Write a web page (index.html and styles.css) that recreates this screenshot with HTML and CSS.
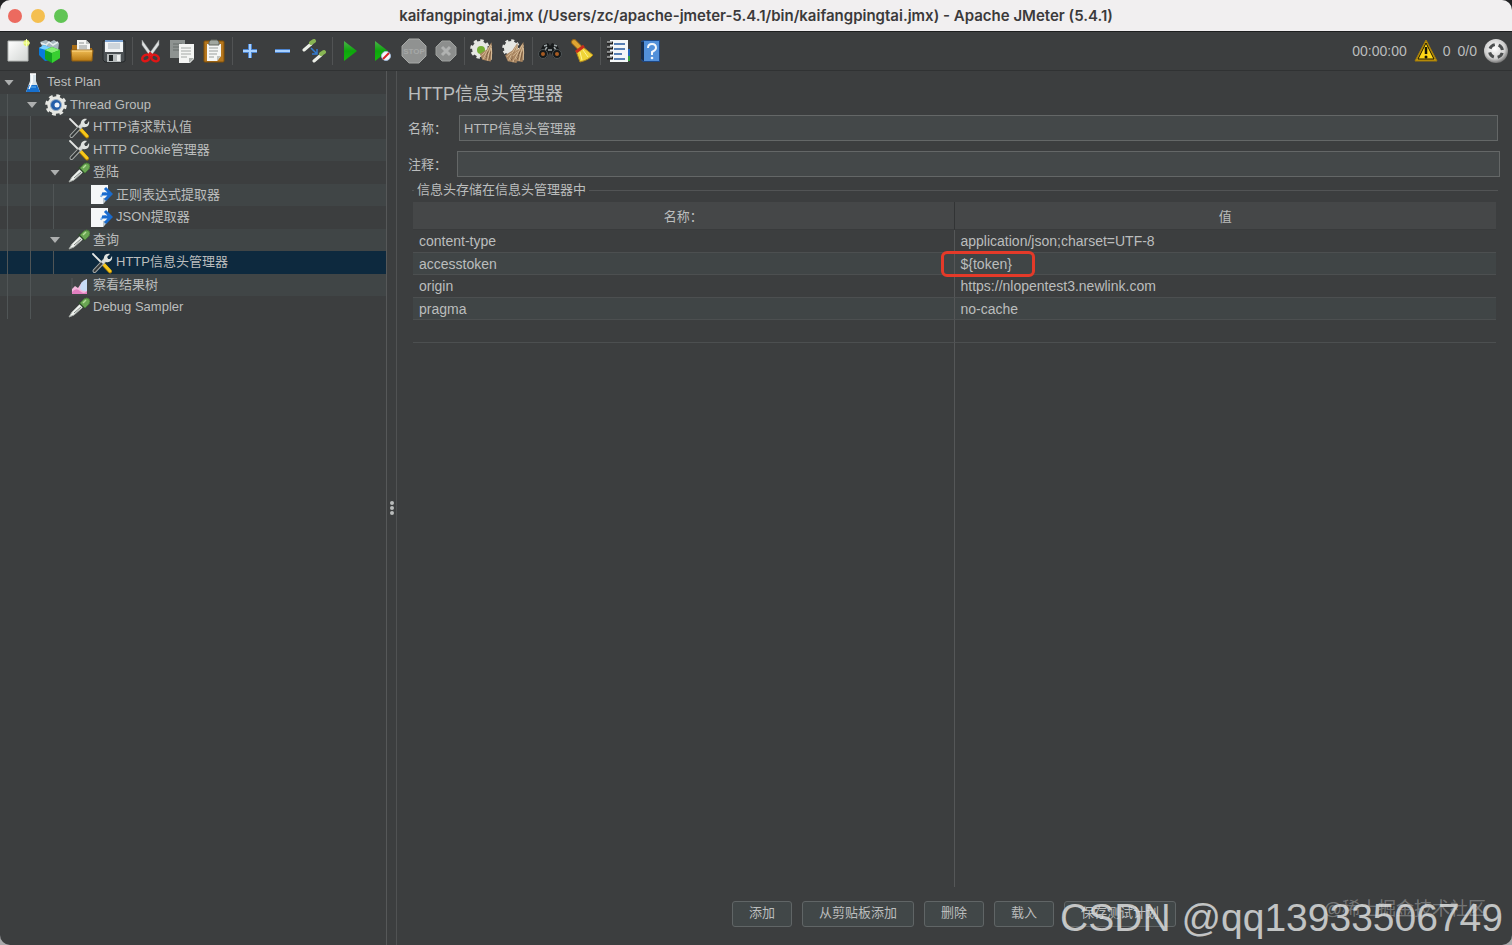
FILE: index.html
```html
<!DOCTYPE html>
<html lang="zh-CN">

<head>
    <meta charset="UTF-8">
    <meta name="viewport" content="width=device-width, initial-scale=1.0">
    <title>Apache JMeter (5.4.1)</title>
    <link rel="stylesheet" href="styles.css">
</head>

<body>
    <!-- shared icons -->
    <svg class="defs" width="0" height="0" aria-hidden="true">
        <defs>
            <linearGradient id="gold" x1="0" y1="0" x2="0" y2="1">
                <stop offset="0" stop-color="#f0bd55" />
                <stop offset="1" stop-color="#b97a12" />
            </linearGradient>
            <linearGradient id="paper" x1="0" y1="0" x2="1" y2="1">
                <stop offset="0" stop-color="#ffffff" />
                <stop offset="1" stop-color="#d2d5d3" />
            </linearGradient>
            <linearGradient id="play" x1="0" y1="0" x2="0" y2="1">
                <stop offset="0" stop-color="#4cb04a" />
                <stop offset="0.5" stop-color="#0da50c" />
                <stop offset="1" stop-color="#14b80c" />
            </linearGradient>
            <radialGradient id="ball" cx="0.45" cy="0.4" r="0.6">
                <stop offset="0" stop-color="#ffffff" />
                <stop offset="0.7" stop-color="#d0d0d0" />
                <stop offset="1" stop-color="#777777" />
            </radialGradient>
        </defs>
        <symbol id="tools" viewBox="0 0 22 22">
            <path d="M2 2l11 11" stroke="#e4e6e4" stroke-width="1.8" stroke-linecap="round" />
            <path d="M12.500 12.500l6.500 7" stroke="#a87900" stroke-width="4" stroke-linecap="round" />
            <path d="M12.500 12l6.500 7" stroke="#f6c71a" stroke-width="3" stroke-linecap="round" />
            <path d="M3.500 19L15 7" stroke="#a4a8a6" stroke-width="4" stroke-linecap="round" />
            <path d="M3.500 19L11 11" stroke="#343838" stroke-width="2" stroke-linecap="round" />
            <path d="M11 11l4-4" stroke="#d8dbd9" stroke-width="3" />
            <path d="M13 8c-1-4 2-7 6-6l-3 3 1 2 2 0 2-3c1 4-2 7-6 6z" fill="#dfe2df" />
        </symbol>
        <symbol id="pipette" viewBox="0 0 22 22">
            <path d="M1 20l3-5 8-8 3 3-9 8z" fill="#eef1ee" stroke="#a9aeaa" />
            <path d="M6 16l7-6" stroke="#7d847f" />
            <path d="M11 5l6 6" stroke="#2f4a2c" stroke-width="2.500" />
            <path d="M12 6l4-4q3-2 5 0t0 5l-4 4z" fill="#6aa653" stroke="#47793a" />
            <path d="M15 6l3-3" stroke="#b3de98" stroke-width="1.500" />
        </symbol>
        <symbol id="extract" viewBox="0 0 22 22">
            <path d="M0 1h17v13l-5 6H0z" fill="#f5f7f8" />
            <path d="M17 14h-5v6z" fill="#b9c5ce" />
            <path d="M10 13q1-4 5-4" fill="none" stroke="#7db4ed" stroke-width="2" />
            <path d="M14 4l6 6-6 6M11 10h8" fill="none" stroke="#196bce" stroke-width="3" />
        </symbol>
        <symbol id="cog" viewBox="0 0 24 24">
            <circle cx="12" cy="12" r="9.500" fill="#e6e7e3" />
            <circle cx="12" cy="12" r="10" fill="none" stroke="#e6e7e3" stroke-width="3.500" stroke-dasharray="4 3.854" />
        </symbol>
        <symbol id="broom" viewBox="0 0 24 24">
            <path d="M21 1l-6 9-8 5 3 7 10 2 2-10z" fill="#a98560" />
            <path d="M20 4l-5 9-4 8M21 5l-3 9-2 9M21 8l0 14M14 12l-5 5M18 13l-5 8" fill="none" stroke="#dec5a0" />
            <path d="M17 12l-3 9M20 12l-2 10" fill="none" stroke="#72553a" />
        </symbol>
    </svg>

    <div class="window">
        <!-- Title bar -->
        <header class="titlebar">
            <div class="lights">
                <button class="light red" aria-label="关闭"></button>
                <button class="light yellow" aria-label="最小化"></button>
                <button class="light green" aria-label="缩放"></button>
            </div>
            <h1>kaifangpingtai.jmx (/Users/zc/apache-jmeter-5.4.1/bin/kaifangpingtai.jmx) - Apache JMeter (5.4.1)</h1>
        </header>

        <!-- Toolbar -->
        <div class="toolbar">
            <button class="tool" aria-label="新建"><svg viewBox="0 0 24 24">
                    <path d="M2 2h20v20H2z" fill="url(#paper)" stroke="#b6b9b7" />
                    <circle cx="20.500" cy="4" r="3" fill="#e1f36c" />
                    <path d="M20.500 0v8M17 4h7" stroke="#f8ffb9" />
                </svg></button>
            <button class="tool" aria-label="模板"><svg viewBox="0 0 24 24">
                    <path d="M2 3l6-2 4 2 4-2 5 3-1 8-13 1z" fill="#a7b7be" />
                    <path d="M3 4l5 2 3-3 4 3 5-3" fill="none" stroke="#e7eeee" stroke-width="1.500" />
                    <path d="M1 9l5-3 7 3v12l-6 1-6-6z" fill="#087bdc" />
                    <path d="M1 9l5-3 7 3-5 2z" fill="#7ad2ff" />
                    <path d="M7 11l7-3 8 3v8l-8 5-7-4z" fill="#13a321" />
                    <path d="M7 11l7-3 8 3-8 3z" fill="#84ef71" />
                    <path d="M14 14v10l8-5v-8z" fill="#38cf31" />
                </svg></button>
            <button class="tool" aria-label="打开"><svg viewBox="0 0 24 24">
                    <path d="M2 11V6h6l2 3h12v3H2z" fill="#a96e16" />
                    <path d="M7 1h9l4 4v8H7z" fill="#f4f5f3" />
                    <path d="M16 1v4h4" fill="#bfc3c1" />
                    <path d="M9 4h5M9 7h8M9 9h8" stroke="#8e9392" />
                    <path d="M1 11h22l-1 11H2z" fill="url(#gold)" stroke="#8c5c13" />
                    <path d="M2 12h20" stroke="#ffda8a" />
                </svg></button>
            <button class="tool" aria-label="保存"><svg viewBox="0 0 24 24">
                    <path d="M1 2h22v20l-2 1H3l-2-2z" fill="#4c5154" stroke="#25292b" />
                    <path d="M3 1h18v12H3z" fill="#f2f4f5" />
                    <path d="M3 1h18v2H3z" fill="#7ba4d4" />
                    <path d="M6 5h12M6 7h12M6 9h12" stroke="#aab6c1" />
                    <path d="M5 15h14v8H5z" fill="#b7bcbd" />
                    <path d="M7 16h4v6H7z" fill="#202526" />
                    <path d="M15 16h3v6h-3z" fill="#eef0ef" />
                </svg></button>
            <span class="sep"></span>
            <button class="tool" aria-label="剪切"><svg viewBox="0 0 24 24">
                    <path d="M4 1l10 14-2 2L4 6zM21 1l-10 14 2 2 8-11z" fill="#dde0e0" stroke="#929797" stroke-width="0.500" />
                    <ellipse cx="8" cy="19" rx="4" ry="3" fill="none" stroke="#df1616" stroke-width="2.500" transform="rotate(-28 8 19)" />
                    <ellipse cx="17" cy="19" rx="4" ry="3" fill="none" stroke="#df1616" stroke-width="2.500" transform="rotate(28 17 19)" />
                    <path d="M10 17l2-3 3 3" fill="none" stroke="#e51a1a" stroke-width="2" />
                </svg></button>
            <button class="tool" aria-label="复制"><svg viewBox="0 0 24 24">
                    <path d="M0 1h15v18H0z" fill="#8e9391" />
                    <path d="M3 5h9M3 8h9M3 11h6" stroke="#676d6a" />
                    <path d="M9 5h15v15l-4 4H9z" fill="#f4f5f3" />
                    <path d="M11 9h10M11 12h10M11 15h10M11 18h6" stroke="#a4a8a5" />
                    <path d="M24 19h-5v5z" fill="#aeb3b0" />
                </svg></button>
            <button class="tool" aria-label="粘贴"><svg viewBox="0 0 24 24">
                    <rect x="2" y="2" width="20" height="21" rx="1" fill="#b5771e" stroke="#825007" />
                    <path d="M5 5h14v12l-4 5H5z" fill="#f5f6f4" />
                    <path d="M7 3l2-2h6l2 2v3H7z" fill="#a1a79f" stroke="#63675f" />
                    <path d="M7 9h9M7 12h9M7 15h8M7 18h5" stroke="#9a9f9c" />
                    <path d="M19 17h-4v5z" fill="#c1c5c1" />
                </svg></button>
            <span class="sep"></span>
            <button class="tool" aria-label="展开"><svg viewBox="0 0 24 24">
                    <path d="M12 5v14M5 12h14" stroke="#4c83ce" stroke-width="4" />
                    <path d="M12 5v14M5 12h14" stroke="#a8d1ff" stroke-width="2" />
                </svg></button>
            <button class="tool" aria-label="折叠"><svg viewBox="0 0 24 24">
                    <path d="M5 12h15" stroke="#4c83ce" stroke-width="4" />
                    <path d="M5 12h15" stroke="#a8d1ff" stroke-width="2" />
                </svg></button>
            <button class="tool" aria-label="启用或禁用"><svg viewBox="0 0 24 24">
                    <path d="M2 11l7-6" stroke="#ecefe8" stroke-width="3" stroke-linecap="round" />
                    <path d="M9 4l3-2" stroke="#88b553" stroke-width="4" stroke-linecap="round" />
                    <path d="M12 22l7-6" stroke="#ecefe8" stroke-width="3" stroke-linecap="round" />
                    <path d="M19 15l3-2" stroke="#88b553" stroke-width="4" stroke-linecap="round" />
                    <path d="M9 9l5 5M15 10v5h-5" fill="none" stroke="#337bd0" stroke-width="1.500" />
                </svg></button>
            <span class="sep"></span>
            <button class="tool" aria-label="启动"><svg viewBox="0 0 24 24">
                    <path d="M6 2l13 10L6 22z" fill="url(#play)" />
                </svg></button>
            <button class="tool" aria-label="不停顿开始"><svg viewBox="0 0 24 24">
                    <path d="M5 2l13 10L5 22z" fill="url(#play)" />
                    <circle cx="16" cy="17" r="4.500" fill="#f3f7fb" stroke="#a2bad8" />
                    <path d="M13 20l6-6" stroke="#d82424" stroke-width="2" />
                </svg></button>
            <button class="tool" aria-label="停止" disabled><svg class="big" viewBox="0 0 26 26">
                    <path d="M8 1h10l7 7v10l-7 7H8l-7-7V8z" fill="#909291" stroke="#a6a8a6" />
                    <text class="stop-text" x="13" y="16" text-anchor="middle">STOP</text>
                </svg></button>
            <button class="tool" aria-label="关闭线程" disabled><svg viewBox="0 0 24 24">
                    <path d="M8 2h8l6 6v8l-6 6H8l-6-6V8z" fill="#8c8e8d" stroke="#9da09e" />
                    <path d="M8 8l8 8M16 8l-8 8" stroke="#b0b2b1" stroke-width="3" />
                </svg></button>
            <span class="sep"></span>
            <button class="tool" aria-label="清除"><svg viewBox="0 0 24 24">
                    <use href="#cog" width="20" height="20" />
                    <circle cx="11" cy="11" r="4" fill="#75af35" />
                    <use href="#broom" x="4" y="1" width="20" height="23" />
                </svg></button>
            <button class="tool" aria-label="清除全部"><svg viewBox="0 0 24 24">
                    <use href="#cog" width="18" height="18" />
                    <use href="#broom" x="-3" y="3" width="21" height="21" />
                    <use href="#broom" x="3" y="1" width="21" height="23" />
                </svg></button>
            <span class="sep"></span>
            <button class="tool" aria-label="查找"><svg class="big" viewBox="0 0 26 26">
                    <path d="M6 7l5-2 2 3 2-3 5 2 5 10-8 3-4-6-4 6-8-3z" fill="#171a1b" />
                    <path d="M7 8l3-1M17 7l3 1M11 12h4M10 9l-2 3M17 9l2 3" stroke="#a0a8aa" stroke-width="1.500" />
                    <circle cx="6" cy="16" r="4.500" fill="#15191a" stroke="#4f5557" />
                    <circle cx="20" cy="16" r="4.500" fill="#15191a" stroke="#4f5557" />
                    <circle cx="6" cy="16" r="2" fill="#a65b23" />
                    <circle cx="20" cy="16" r="2" fill="#a65b23" />
                </svg></button>
            <button class="tool" aria-label="重置搜索"><svg viewBox="0 0 24 24">
                    <path d="M4 3l5 5" stroke="#92641b" stroke-width="6" stroke-linecap="round" />
                    <path d="M4 3l5 5" stroke="#dfa432" stroke-width="4" stroke-linecap="round" />
                    <path d="M13 8l10 8q-4 5-13 7L6 12z" fill="#efd437" stroke="#ac831d" />
                    <path d="M10 13l2 8M13 11l5 7" stroke="#fff092" />
                    <path d="M6 13l8-6" stroke="#c72d1b" stroke-width="3" />
                </svg></button>
            <span class="sep"></span>
            <button class="tool" aria-label="函数助手"><svg viewBox="0 0 24 24">
                    <path d="M19 10h5v12h-5z" fill="#2465b8" />
                    <path d="M20 17h4v5h-4z" fill="#35a43b" />
                    <path d="M4 1h18v22H4z" fill="#f5f7f8" />
                    <path d="M8 5h11M8 10h11M8 15h8M8 20h11" stroke="#245a9f" stroke-width="1.500" />
                    <path d="M1 4h6M1 9h6M1 14h6M1 19h6" stroke="#222" stroke-width="3" />
                    <path d="M1 3h5M1 8h5M1 13h5M1 18h5" stroke="#e6e8e8" />
                </svg></button>
            <button class="tool" aria-label="帮助"><svg viewBox="0 0 24 24">
                    <path d="M3 2l3-1h16v22H5l-2-2z" fill="#1e4885" />
                    <path d="M6 2h15v20H6z" fill="#5290da" />
                    <path d="M3 3h3v19l-3-2z" fill="#172c4b" />
                    <path d="M10 9q0-4 4-4t4 4q0 2-4 4v3" fill="none" stroke="#f4f7fb" stroke-width="2" />
                    <circle cx="14" cy="19" r="1.300" fill="#f4f7fb" />
                </svg></button>

            <div class="status">
                <span>00:00:00</span>
                <button class="warning" aria-label="日志">
                    <svg viewBox="0 0 24 24">
                        <path d="M12 1l11 21H1z" fill="#c79909" stroke="#a27b08" />
                        <path d="M12 4l8 16H4z" fill="#ffd817" stroke="#1d1906" />
                        <path d="M12 8v7" stroke="#171407" stroke-width="2.500" />
                        <circle cx="12" cy="18" r="1.500" fill="#171407" />
                    </svg>
                    0
                </button>
                <span>0/0</span>
                <svg viewBox="0 0 24 24">
                    <circle cx="12" cy="12" r="12" fill="url(#ball)" />
                    <circle cx="12" cy="12" r="6.500" fill="none" stroke="#4b4e4f" stroke-width="3" stroke-dasharray="6.200 4" stroke-dashoffset="-2" />
                </svg>
            </div>
        </div>

        <main class="content">
            <!-- Test plan tree -->
            <nav class="sidebar" aria-label="测试计划">
                <ul class="tree">
                    <li><button class="toggle" aria-label="折叠 Test Plan"></button>
                        <svg viewBox="0 0 22 22">
                            <path d="M8 2h6v7l4 11H4L8 9z" fill="#d8e3e9" />
                            <path d="M7 13h8l3 7H4z" fill="#1670cf" />
                            <path d="M8 2h6M10 3v7l-3 7" fill="none" stroke="#fff" stroke-width="1.500" />
                            <path d="M9 15h5" stroke="#62b5f1" />
                        </svg>
                        <span>Test Plan</span>
                    </li>
                    <li><i></i><button class="toggle" aria-label="折叠 Thread Group"></button>
                        <svg viewBox="0 0 22 22">
                            <use href="#cog" width="22" height="22" />
                            <circle cx="11" cy="11" r="5.500" fill="#245eaa" stroke="#9baec0" />
                            <circle cx="12" cy="11" r="2.500" fill="#f2f5fb" />
                        </svg>
                        <span>Thread Group</span>
                    </li>
                    <li class="leaf"><i></i><i></i><svg><use href="#tools" /></svg><span>HTTP请求默认值</span></li>
                    <li class="leaf"><i></i><i></i><svg><use href="#tools" /></svg><span>HTTP Cookie管理器</span></li>
                    <li><i></i><i></i><button class="toggle" aria-label="折叠 登陆"></button><svg><use href="#pipette" /></svg><span>登陆</span></li>
                    <li class="leaf"><i></i><i></i><i></i><svg><use href="#extract" /></svg><span>正则表达式提取器</span></li>
                    <li class="leaf"><i></i><i></i><i></i><svg><use href="#extract" /></svg><span>JSON提取器</span></li>
                    <li><i></i><i></i><button class="toggle" aria-label="折叠 查询"></button><svg><use href="#pipette" /></svg><span>查询</span></li>
                    <li class="leaf selected"><i></i><i></i><i></i><svg><use href="#tools" /></svg><span>HTTP信息头管理器</span></li>
                    <li class="leaf"><i></i><i></i>
                        <svg viewBox="0 0 22 22">
                            <path d="M4 4v15h15" fill="none" stroke="#55595a" />
                            <path d="M4 19v-4l3-3 3 2 4-6 5-3v14z" fill="#f2b9dc" />
                            <path d="M12 15q0-8 7-10v12q-4 1-7-2z" fill="#c7dcf7" />
                            <path d="M4 18q4-5 8-1t7 0v3H4z" fill="#e27fc0" />
                        </svg>
                        <span>察看结果树</span>
                    </li>
                    <li class="leaf"><i></i><i></i><svg><use href="#pipette" /></svg><span>Debug Sampler</span></li>
                </ul>
            </nav>

            <div class="splitter"><b></b><b></b><b></b></div>

            <!-- Header manager -->
            <section class="panel">
                <h2>HTTP信息头管理器</h2>
                <div class="field name-field">
                    <label for="name">名称：</label>
                    <input id="name" type="text" value="HTTP信息头管理器">
                </div>
                <div class="field">
                    <label for="comment">注释：</label>
                    <input id="comment" type="text">
                </div>

                <div class="group-title"><span>信息头存储在信息头管理器中</span></div>
                <div class="table-area">
                    <table>
                        <thead>
                            <tr>
                                <th>名称：</th>
                                <th>值</th>
                            </tr>
                        </thead>
                        <tbody>
                            <tr>
                                <td>content-type</td>
                                <td>application/json;charset=UTF-8</td>
                            </tr>
                            <tr>
                                <td>accesstoken</td>
                                <td class="marked">${token}</td>
                            </tr>
                            <tr>
                                <td>origin</td>
                                <td>https://nlopentest3.newlink.com</td>
                            </tr>
                            <tr>
                                <td>pragma</td>
                                <td>no-cache</td>
                            </tr>
                            <tr>
                                <td></td>
                                <td></td>
                            </tr>
                        </tbody>
                    </table>
                </div>

                <div class="actions">
                    <button>添加</button>
                    <button>从剪贴板添加</button>
                    <button>删除</button>
                    <button>载入</button>
                    <button>保存测试计划</button>
                </div>
            </section>
        </main>
    </div>

    <div class="watermark community">@稀土掘金技术社区</div>
    <div class="watermark author">CSDN @qq13933506749</div>
</body>

</html>
```

FILE: styles.css
```css
*,
*::before,
*::after {
    box-sizing: border-box;
}

body {
    margin: 0;
    height: 100vh;
    overflow: hidden;
    background: linear-gradient(#222224 50%, #a9a9ab 50%);
    color: #bbbdbd;
    font-family: "Liberation Sans", "Noto Sans CJK SC", sans-serif;
    font-size: 13px;
}

button,
input {
    font: inherit;
    color: inherit;
}

button {
    padding: 0;
    border: none;
    background: none;
}

.defs {
    position: absolute;
}

.window {
    display: flex;
    flex-direction: column;
    height: 100%;
    border-radius: 10px;
    overflow: hidden;
    background-color: #3c3e3f;
}

/* title bar */
.titlebar {
    display: grid;
    grid-template-columns: 80px 1fr 80px;
    align-items: center;
    height: 32px;
    background-color: #f1eff0;
    border-bottom: 1px solid #1d1e1f;
}

.titlebar h1 {
    margin: 0;
    color: #3b3a3b;
    font-family: Inter, sans-serif;
    font-size: 15px;
    font-weight: 600;
    line-height: 18px;
    text-align: center;
    white-space: nowrap;
}

.lights {
    display: flex;
    gap: 9px;
    padding-left: 8px;
}

.light {
    width: 14px;
    height: 14px;
    border-radius: 50%;
}

.red {
    background-color: #ec6a5f;
}

.yellow {
    background-color: #f4bf50;
}

.green {
    background-color: #61c455;
}

/* toolbar */
.toolbar {
    display: flex;
    align-items: center;
    height: 39px;
    padding: 0 4px 0 2px;
    border-bottom: 1px solid #303233;
}

.tool {
    display: flex;
    align-items: center;
    justify-content: center;
    width: 32px;
    height: 32px;
}

.toolbar svg {
    width: 24px;
    height: 24px;
}

.toolbar .big {
    width: 26px;
    height: 26px;
}

.stop-text {
    fill: #a6a8a7;
    font-size: 8px;
    font-weight: bold;
}

.sep {
    width: 1px;
    height: 28px;
    margin: 0 1px 0 2px;
    background-color: #515354;
}

.status {
    display: flex;
    align-items: center;
    gap: 7px;
    margin-left: auto;
    font-size: 14px;
}

.warning {
    display: flex;
    align-items: center;
    gap: 5px;
}

/* tree */
.content {
    display: flex;
    flex: 1;
    min-height: 0;
}

.sidebar {
    width: 387px;
    border-right: 1px solid #565859;
}

.tree {
    margin: 0;
    padding: 0;
    list-style: none;
}

.tree li {
    display: flex;
    align-items: center;
    height: 23px;
}

.tree li:nth-child(even) {
    height: 22px;
    background-color: #404546;
}

.tree .selected {
    background-color: #0d293e;
}

.tree i {
    align-self: stretch;
    width: 23px;
    background: linear-gradient(#505556, #505556) 7px 0 / 1px 100% no-repeat;
}

.tree svg {
    width: 22px;
    height: 22px;
    margin-right: 3px;
}

.tree span {
    line-height: 18px;
    padding-bottom: 1px;
}

.tree .leaf svg {
    margin-left: 22px;
}

.toggle {
    width: 18px;
    height: 18px;
    margin-right: 4px;
}

.toggle::before {
    content: "";
    display: block;
    width: 10px;
    height: 6px;
    margin: auto;
    background-color: #adafaf;
    clip-path: polygon(0 0, 100% 0, 50% 100%);
}

.splitter {
    display: flex;
    flex-direction: column;
    align-items: center;
    justify-content: center;
    gap: 1px;
    width: 10px;
    border-right: 1px solid #505253;
}

.splitter b {
    width: 4px;
    height: 4px;
    border-radius: 50%;
    background-color: #b9bbbb;
}

/* panel */
.panel {
    display: flex;
    flex: 1;
    flex-direction: column;
    padding: 10px 12px 18px 11px;
}

h2 {
    margin: 0 0 7px;
    font-size: 18px;
    font-weight: normal;
    line-height: 27px;
}

.field {
    display: flex;
    align-items: center;
    margin-bottom: 10px;
}

.field label {
    width: 49px;
    padding-bottom: 2px;
}

/* the TC face centres the full-width colon */
label,
th {
    font-family: "Liberation Sans", "Noto Sans CJK TC", sans-serif;
}

.field input {
    flex: 1;
    height: 26px;
    padding: 0 4px 2px;
    border: 1px solid #646767;
    background-color: #444849;
    outline: none;
}

.name-field {
    padding-right: 2px;
}

.name-field label {
    width: 51px;
}

.group-title {
    display: flex;
    align-items: center;
    gap: 3px;
    height: 20px;
    margin: -7px 2px 2px 4px;
    line-height: 20px;
}

.group-title::before,
.group-title::after {
    content: "";
    height: 1px;
    background-color: #525455;
}

.group-title::before {
    width: 2px;
}

.group-title::after {
    flex: 1;
}

.table-area {
    flex: 1;
    margin: 0 4px 14px 5px;
    background: linear-gradient(#555758, #555758) 50% 0 / 1px 100% no-repeat;
}

table {
    width: 100%;
    border-collapse: separate;
    border-spacing: 0;
    table-layout: fixed;
}

th {
    height: 28px;
    padding: 0;
    background-color: #454748;
    border-bottom: 1px solid #393b3c;
    font-weight: normal;
}

th:first-child {
    border-right: 1px solid #323435;
}

td {
    height: 23px;
    padding: 0 6px;
    border-bottom: 1px solid #4c4f50;
    font-size: 14px;
    line-height: 20px;
}

td:first-child {
    border-right: 1px solid #555758;
}

tr:nth-child(even) td {
    height: 22px;
    background-color: #404546;
}

.marked {
    position: relative;
}

/* red frame round the token value */
.marked::after {
    content: "";
    position: absolute;
    top: -2px;
    left: -14px;
    width: 94px;
    height: 26px;
    border: 3px solid #e43a29;
    border-radius: 6px;
}

.actions {
    display: flex;
    justify-content: center;
    gap: 10px;
}

.actions button {
    height: 26px;
    padding: 0 16px 2px;
    border: 1px solid #606566;
    border-radius: 3px;
    background-color: #414748;
    line-height: 20px;
    white-space: nowrap;
}

/* watermarks */
.watermark {
    position: absolute;
    white-space: nowrap;
    pointer-events: none;
}

.community {
    right: 26px;
    bottom: 25px;
    color: rgba(255, 255, 255, 0.3);
    font-size: 18px;
}

.author {
    right: 9px;
    bottom: 5px;
    color: rgba(225, 227, 227, 0.82);
    font-size: 39px;
}
```
